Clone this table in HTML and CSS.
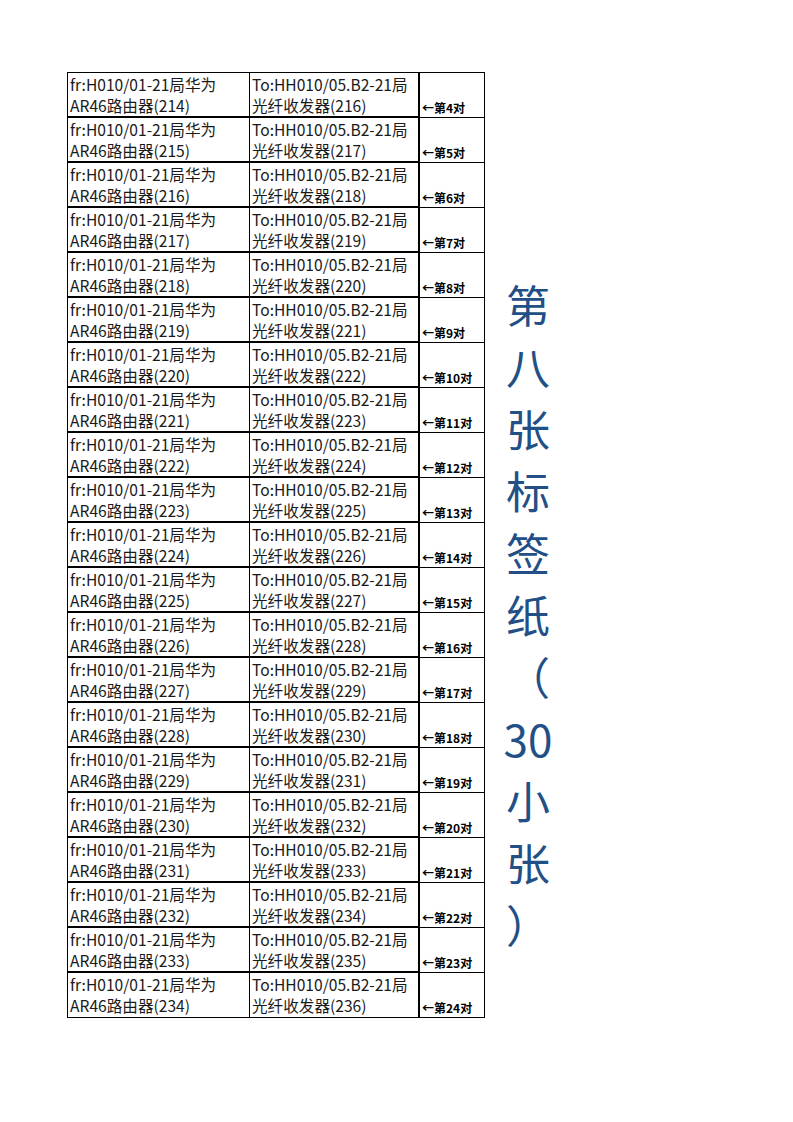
FILE: index.html
```html
<!DOCTYPE html>
<html lang="zh-CN">
<head>
<meta charset="utf-8">
<link rel="stylesheet" href="styles.css">
</head>
<body>
<div class="page">
  <div class="table" id="table"></div>
  <div class="side">
    <div class="vline">第</div>
    <div class="vline">八</div>
    <div class="vline">张</div>
    <div class="vline">标</div>
    <div class="vline">签</div>
    <div class="vline">纸</div>
    <div class="vline">（</div>
    <div class="vline">30</div>
    <div class="vline">小</div>
    <div class="vline">张</div>
    <div class="vline">）</div>
  </div>
</div>
<script src="script.js"></script>
</body>
</html>
```
FILE: styles.css
```css
html, body { margin: 0; padding: 0; background: #fff; }
.page {
  display: flex;
  padding-top: 72px;
  padding-left: 67px;
  font-family: "Noto Sans CJK SC", "Noto Sans", sans-serif;
}
.table {
  width: 418px;
  border-top: 1px solid #000;
  display: flex;
  flex-direction: column;
}
.row {
  display: grid;
  grid-template-columns: 182px 169px 67px;
  height: 45px;
}
.cell {
  box-sizing: border-box;
  border-left: 1px solid #000;
  border-bottom: 2px solid #000;
  padding-left: 2px;
  font-family: "Noto Sans CJK SC", "Noto Sans", sans-serif;
  font-size: 15.6px;
  line-height: 21px;
  padding-top: 1px;
  color: #1a1a1a;
  white-space: nowrap;
  overflow: hidden;
}
.row:last-child .cell { border-bottom-width: 1px; }
.cell.tag {
  border-left: 2px solid #000;
  border-right: 1px solid #000;
  border-bottom: 1px solid #000;
  display: flex;
  align-items: flex-end;
  padding-left: 2px;
  padding-top: 0;
  padding-bottom: 3px;
  font-family: "Noto Sans CJK SC", sans-serif;
  font-size: 12px;
  line-height: 13px;
  font-weight: bold;
  color: #000;
}
.side {
  margin-left: 20px;
  margin-top: 201px;
  width: 46px;
  display: flex;
  flex-direction: column;
  align-items: center;
}
.vline {
  font-size: 44px;
  line-height: 62px;
  height: 62px;
  color: #224f86;
  white-space: nowrap;
}
```
FILE: script.js
```js
var t = document.getElementById('table');
for (var i = 0; i < 21; i++) {
  var r = document.createElement('div');
  r.className = 'row';
  var a = document.createElement('div');
  a.className = 'cell';
  a.innerHTML = 'fr:H010/01-21局华为<br>AR46路由器(' + (214 + i) + ')';
  var b = document.createElement('div');
  b.className = 'cell';
  b.innerHTML = 'To:HH010/05.B2-21局<br>光纤收发器(' + (216 + i) + ')';
  var c = document.createElement('div');
  c.className = 'cell tag';
  c.textContent = '←第' + (4 + i) + '对';
  r.appendChild(a); r.appendChild(b); r.appendChild(c);
  t.appendChild(r);
}
```
